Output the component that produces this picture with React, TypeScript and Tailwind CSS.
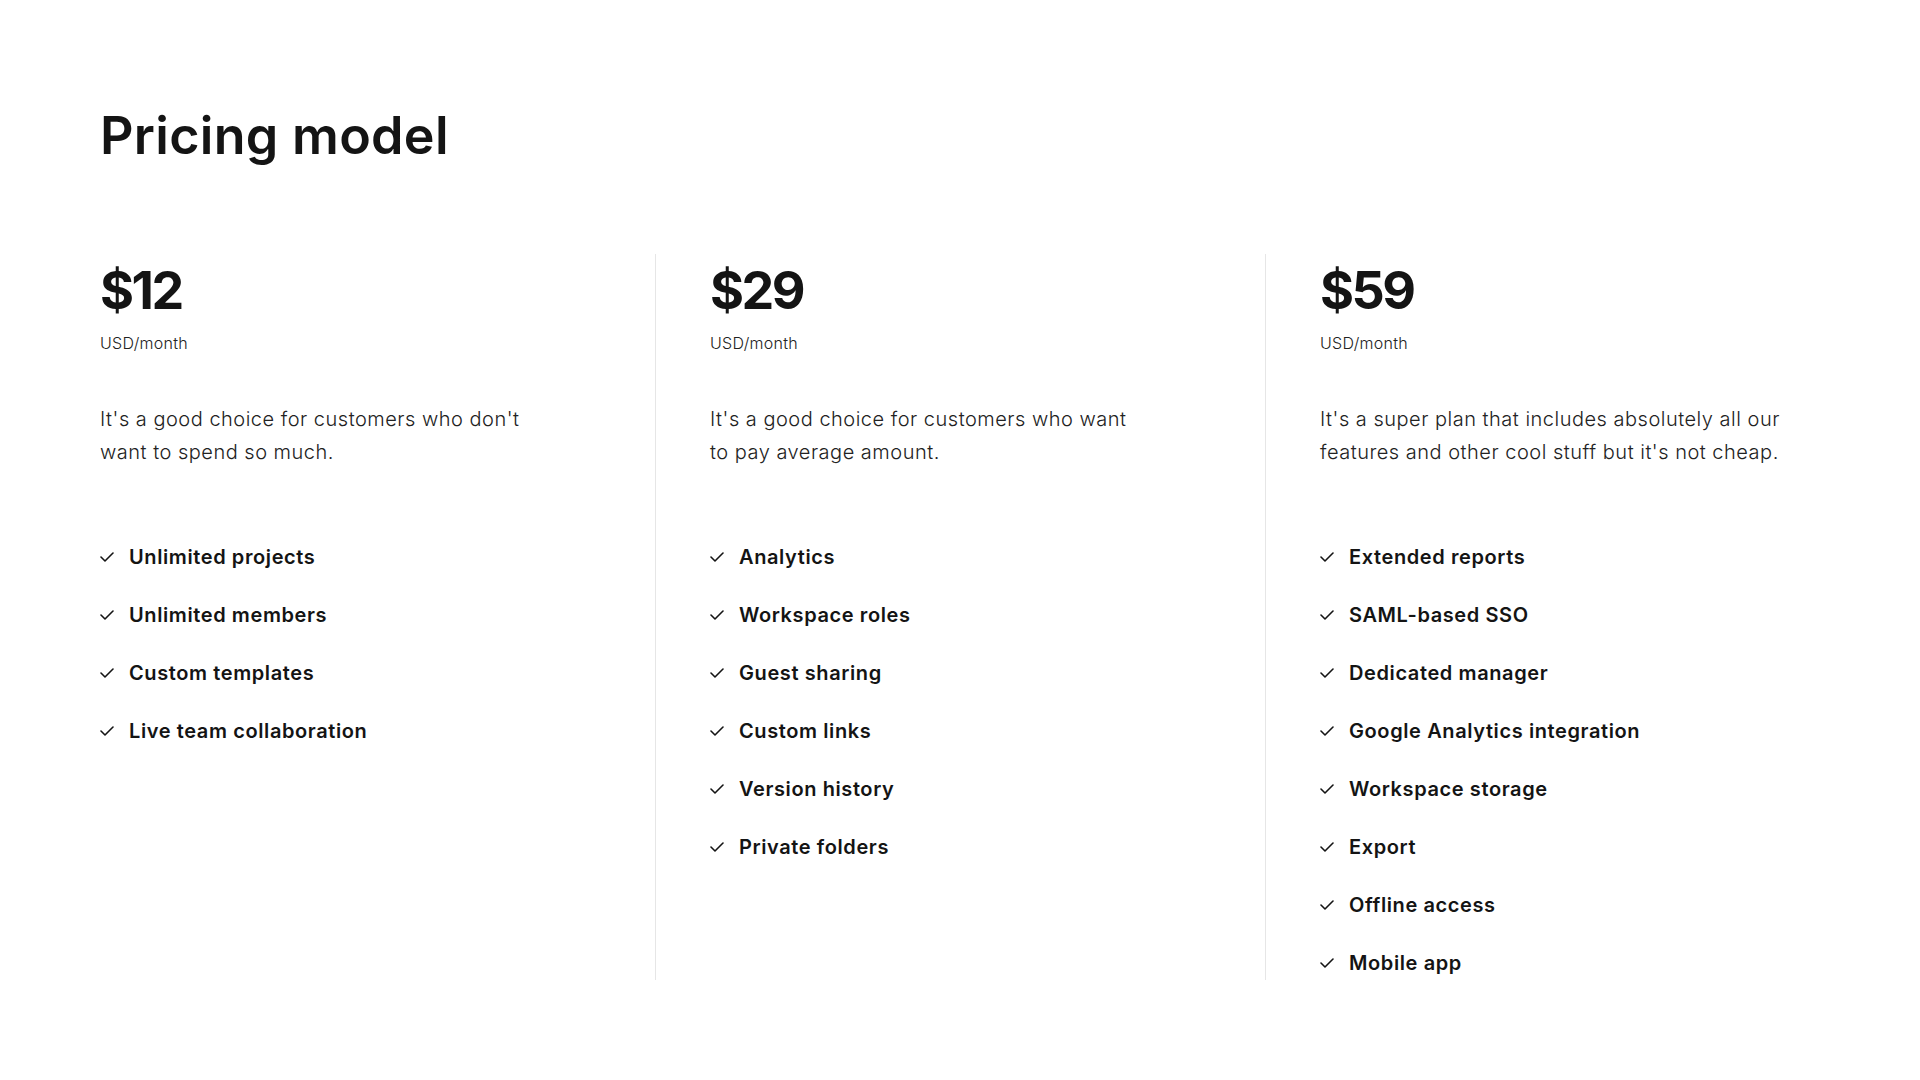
import React from "react";

const plans = [
  {
    price: "$12",
    lines: ["It's a good choice for customers who don't", "want to spend so much."],
    features: ["Unlimited projects", "Unlimited members", "Custom templates", "Live team collaboration"],
  },
  {
    price: "$29",
    lines: ["It's a good choice for customers who want", "to pay average amount."],
    features: ["Analytics", "Workspace roles", "Guest sharing", "Custom links", "Version history", "Private folders"],
  },
  {
    price: "$59",
    lines: ["It's a super plan that includes absolutely all our", "features and other cool stuff but it's not cheap."],
    features: [
      "Extended reports",
      "SAML-based SSO",
      "Dedicated manager",
      "Google Analytics integration",
      "Workspace storage",
      "Export",
      "Offline access",
      "Mobile app",
    ],
  },
];

function Check() {
  return (
    <svg width="14" height="10" viewBox="0 0 14 10" className="shrink-0" fill="none">
      <polyline points="1,5 5,9 13,1" stroke="#141414" strokeWidth="1.6" strokeLinecap="round" strokeLinejoin="round" />
    </svg>
  );
}

function Column({ plan }: { plan: (typeof plans)[number] }) {
  return (
    <div className="pt-[11px]">
      <div className="text-[52px] font-bold leading-none tracking-[-2.5px] text-[#141414]">{plan.price}</div>
      <div className="mt-[16px] text-[16px] font-light leading-[20px] tracking-[0.3px] text-[#222]">USD/month</div>
      <p className="mt-[50px] text-[20px] font-light leading-[33px] tracking-[0.5px] text-[#222]">
        {plan.lines.map((l) => (
          <span key={l} className="block whitespace-nowrap">
            {l}
          </span>
        ))}
      </p>
      <ul className="mt-[73px] flex flex-col gap-[28px]">
        {plan.features.map((f) => (
          <li
            key={f}
            className="flex items-center gap-[15px] text-[20px] font-semibold leading-[30px] tracking-[0.6px] text-[#141414]"
          >
            <Check />
            <span>{f}</span>
          </li>
        ))}
      </ul>
    </div>
  );
}

export default function App() {
  return (
    <div className="min-h-screen bg-white px-[100px] pt-[110px]" style={{ fontFamily: "Inter, 'Noto Sans', sans-serif" }}>
      <h1 className="text-[52px] font-semibold leading-none tracking-[0.3px] text-[#141414]">Pricing model</h1>
      <div className="mt-[92px] flex h-[726px]">
        <div className="w-[555px] pr-[55px]">
          <Column plan={plans[0]} />
        </div>
        <div className="w-[610px] border-l border-[#e6e6e6] pl-[54px] pr-[55px]">
          <Column plan={plans[1]} />
        </div>
        <div className="flex-1 border-l border-[#e6e6e6] pl-[54px]">
          <Column plan={plans[2]} />
        </div>
      </div>
    </div>
  );
}
